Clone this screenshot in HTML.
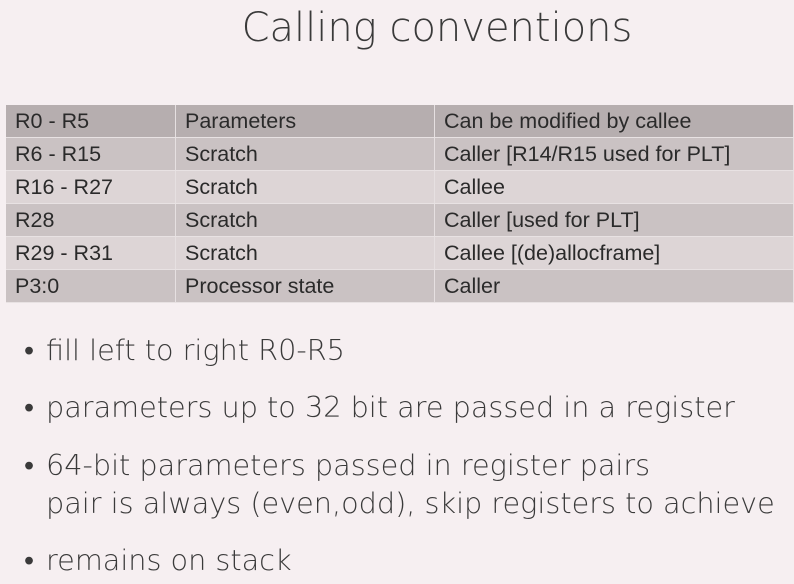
<!DOCTYPE html><html><head><style>
body{margin:0;width:794px;height:584px;background:#f6eff1;overflow:hidden;position:relative;font-family:"DejaVu Sans","Liberation Sans",sans-serif;}
h1{position:absolute;top:5px;left:0;width:874px;text-align:center;margin:0;font-weight:200;font-size:40px;color:#3a3a3a}
table{position:absolute;left:6px;top:105px;width:788px;border-collapse:collapse;font-family:"Liberation Sans",sans-serif;font-size:21.5px;color:#2a2a2a}
td{height:32px;padding:0 0 0 9px;border-right:1px solid #e6e0e1;border-bottom:1px solid #e8e2e3;white-space:nowrap}
tr td:nth-child(1){width:160px}tr td:nth-child(2){width:249px}
.a td{background:#b6aeaf}.b td{background:#cac2c3}.c td{background:#ddd5d6}
.bl{position:absolute;left:24px;font-weight:200;font-size:28.7px;color:#3a3a3a;line-height:38px}
.bl span{position:absolute;left:0;top:0}
.bl div{margin-left:22px}
</style></head><body>
<h1>Calling conventions</h1>
<table>
<tr class="a"><td>R0 - R5</td><td>Parameters</td><td>Can be modified by callee</td></tr>
<tr class="b"><td>R6 - R15</td><td>Scratch</td><td>Caller [R14/R15 used for PLT]</td></tr>
<tr class="c"><td>R16 - R27</td><td>Scratch</td><td>Callee</td></tr>
<tr class="b"><td>R28</td><td>Scratch</td><td>Caller [used for PLT]</td></tr>
<tr class="c"><td>R29 - R31</td><td>Scratch</td><td>Callee [(de)allocframe]</td></tr>
<tr class="b"><td>P3:0</td><td>Processor state</td><td>Caller</td></tr>
</table>
<div class="bl" style="top:331px"><span>•</span><div>fill left to right R0-R5</div></div>
<div class="bl" style="top:388px"><span>•</span><div>parameters up to 32 bit are passed in a register</div></div>
<div class="bl" style="top:446px"><span>•</span><div>64-bit parameters passed in register pairs<br>pair is always (even,odd), skip registers to achieve</div></div>
<div class="bl" style="top:541px"><span>•</span><div>remains on stack</div></div>
</body></html>
